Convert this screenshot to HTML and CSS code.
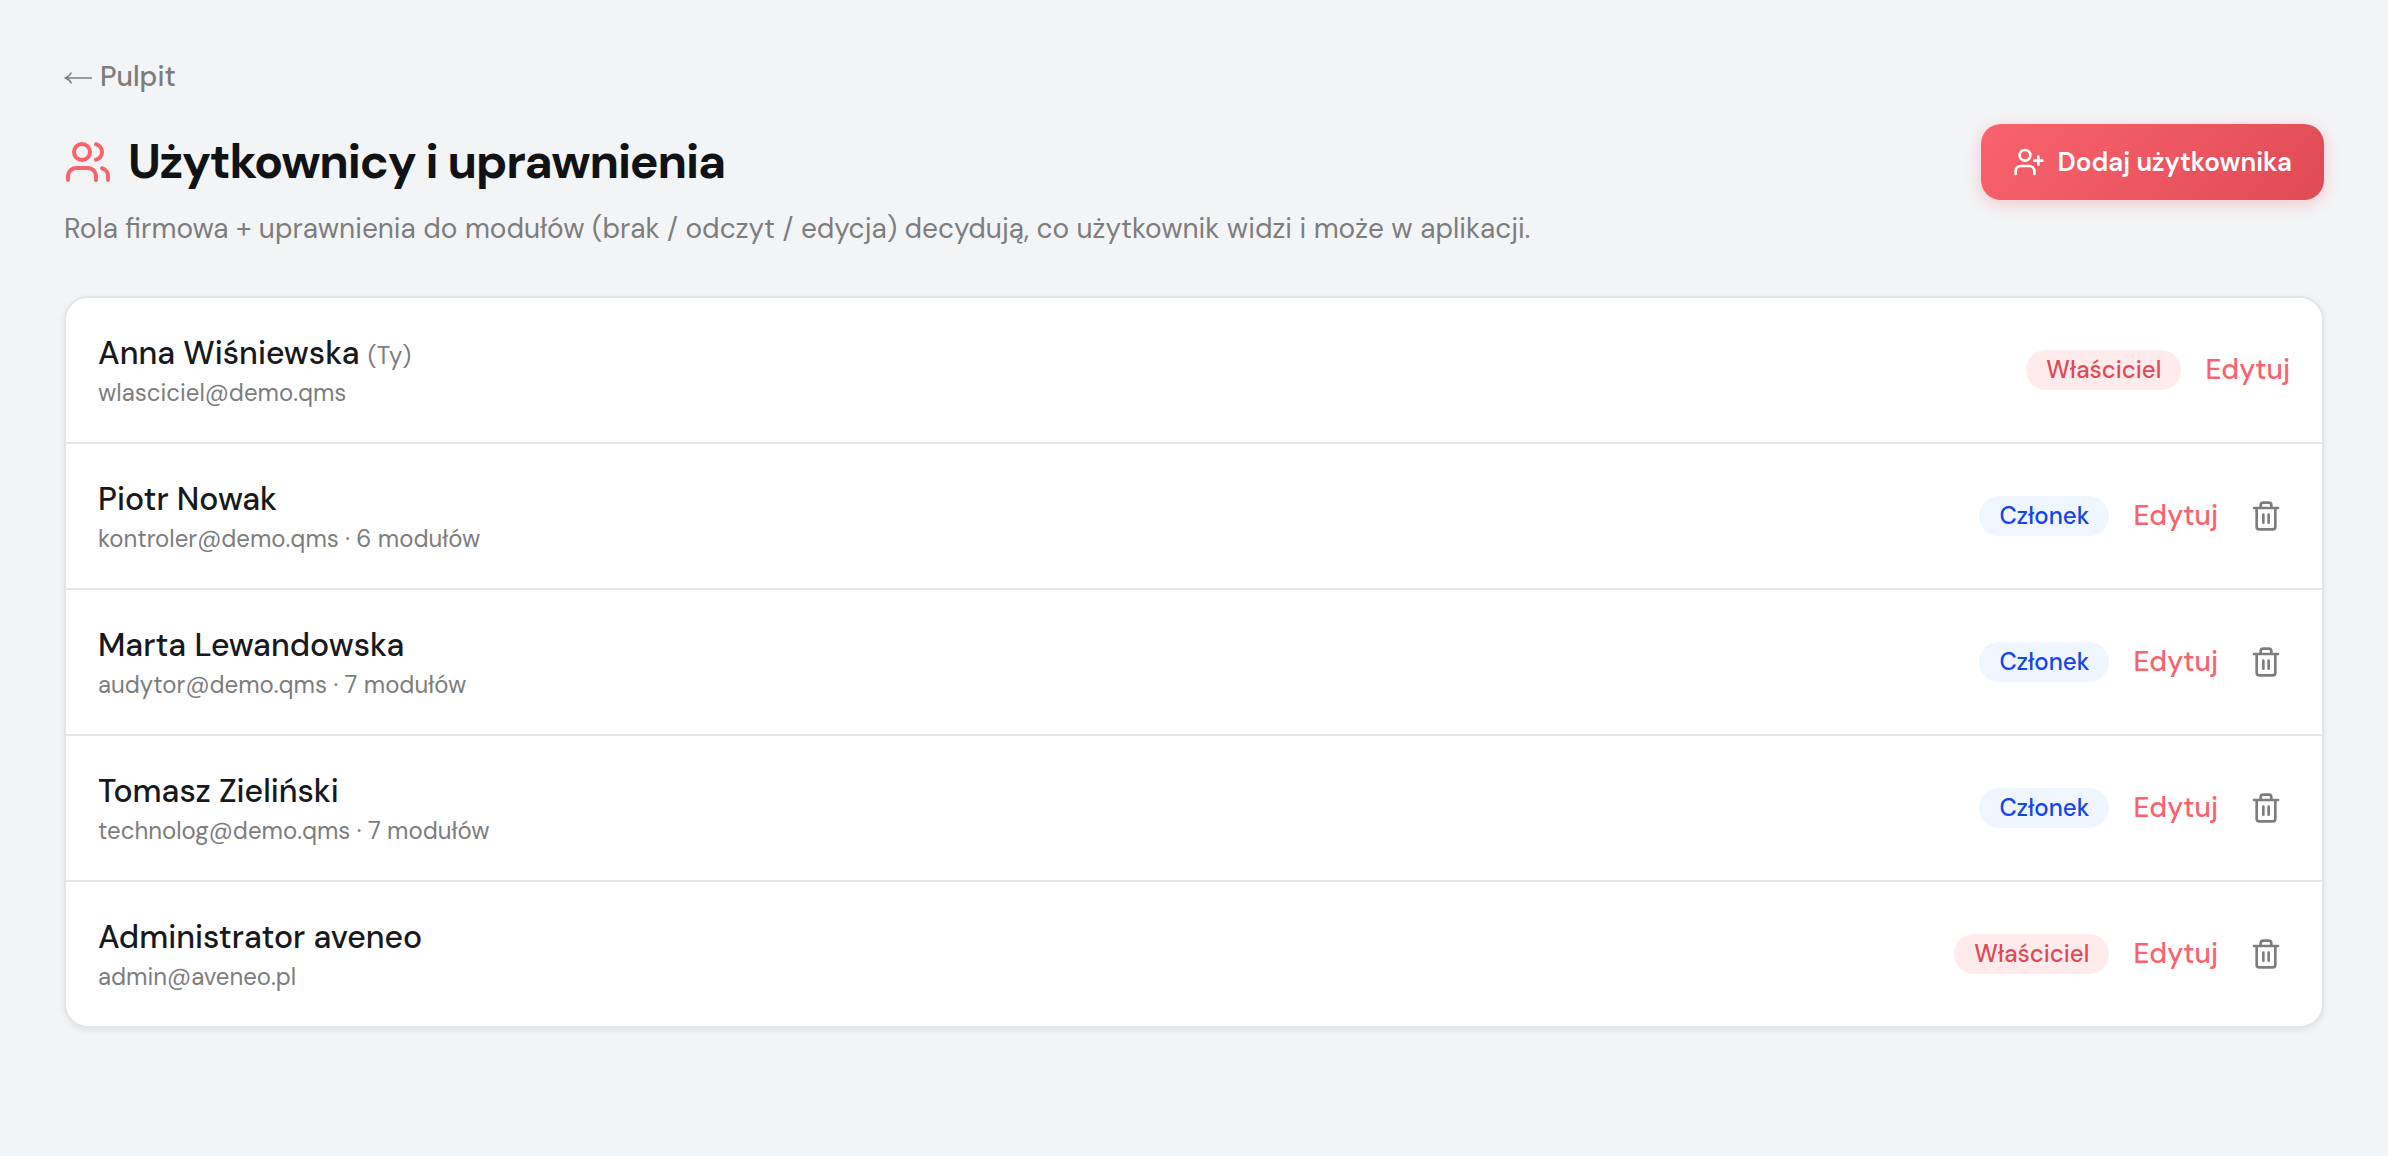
FILE: index.html
```html
<!DOCTYPE html>
<html lang="pl">
<head>
  <meta charset="utf-8">
  <meta name="viewport" content="width=device-width, initial-scale=1">
  <title>Użytkownicy i uprawnienia</title>
  <link rel="stylesheet" href="styles.css">
</head>
<body>
  <svg class="sprite" aria-hidden="true">
    <symbol id="icon-trash" viewBox="0 0 24 24">
      <path d="M3 6h18M19 6v14a2 2 0 0 1-2 2H7a2 2 0 0 1-2-2V6M8 6V4a2 2 0 0 1 2-2h4a2 2 0 0 1 2 2v2M10 11v6M14 11v6"/>
    </symbol>
  </svg>
  <main class="page">
    <a class="back" href="#"><svg class="arrow" viewBox="0 0 28 16" aria-hidden="true"><path d="M28 9H2M7.500 3.500Q5.500 7.500 1.500 9Q5.500 10.500 7.500 14.500"/></svg>Pulpit</a>
    <header class="header">
      <h1 class="title">
        <svg class="icon icon-lg" viewBox="0 0 24 24" aria-hidden="true"><path d="M16 21v-2a4 4 0 0 0-4-4H6a4 4 0 0 0-4 4v2"/><circle cx="9" cy="7" r="4"/><path d="M22 21v-2a4 4 0 0 0-3-3.87M16 3.13a4 4 0 0 1 0 7.75"/></svg>
        Użytkownicy i uprawnienia
      </h1>
      <button class="add" type="button">
        <svg class="icon" viewBox="0 0 24 24" aria-hidden="true"><path d="M16 21v-2a4 4 0 0 0-4-4H6a4 4 0 0 0-4 4v2"/><circle cx="9" cy="7" r="4"/><path d="M19 8v6M22 11h-6"/></svg>
        Dodaj użytkownika
      </button>
    </header>
    <p class="subtitle">Rola firmowa + uprawnienia do modułów (brak / odczyt / edycja) decydują, co użytkownik widzi i może w aplikacji.</p>
    <ul class="users">
      <li class="user">
        <div class="who"><div class="name">Anna Wiśniewska <span class="you">(Ty)</span></div><div class="meta">wlasciciel@demo.qms</div></div>
        <span class="badge badge-owner">Właściciel</span>
        <button class="edit" type="button">Edytuj</button>
      </li>
      <li class="user">
        <div class="who"><div class="name">Piotr Nowak</div><div class="meta">kontroler@demo.qms · 6 modułów</div></div>
        <span class="badge badge-member">Członek</span>
        <button class="edit" type="button">Edytuj</button>
        <button class="remove" type="button" aria-label="Usuń"><svg class="icon"><use href="#icon-trash"/></svg></button>
      </li>
      <li class="user">
        <div class="who"><div class="name">Marta Lewandowska</div><div class="meta">audytor@demo.qms · 7 modułów</div></div>
        <span class="badge badge-member">Członek</span>
        <button class="edit" type="button">Edytuj</button>
        <button class="remove" type="button" aria-label="Usuń"><svg class="icon"><use href="#icon-trash"/></svg></button>
      </li>
      <li class="user">
        <div class="who"><div class="name">Tomasz Zieliński</div><div class="meta">technolog@demo.qms · 7 modułów</div></div>
        <span class="badge badge-member">Członek</span>
        <button class="edit" type="button">Edytuj</button>
        <button class="remove" type="button" aria-label="Usuń"><svg class="icon"><use href="#icon-trash"/></svg></button>
      </li>
      <li class="user">
        <div class="who"><div class="name">Administrator aveneo</div><div class="meta">admin@aveneo.pl</div></div>
        <span class="badge badge-owner">Właściciel</span>
        <button class="edit" type="button">Edytuj</button>
        <button class="remove" type="button" aria-label="Usuń"><svg class="icon"><use href="#icon-trash"/></svg></button>
      </li>
    </ul>
  </main>
</body>
</html>
```
FILE: styles.css
```css
*, *::before, *::after { box-sizing: border-box; }

body {
  margin: 0;
  min-height: 100vh;
  background: #f3f4f6;
  color: #18191b;
  font-family: "DM Sans", Inter, "Liberation Sans", sans-serif;
  font-size: 28px;
  line-height: 42px;
}

button {
  border: 0;
  padding: 0;
  background: none;
  font: inherit;
  cursor: pointer;
}

.sprite { display: none; }

.icon {
  flex: none;
  width: 32px;
  height: 32px;
  fill: none;
  stroke: currentColor;
  stroke-width: 2;
  stroke-linecap: round;
  stroke-linejoin: round;
}

.icon-lg { width: 48px; height: 48px; color: #f9636e; }

.page { padding: 56px 64px; }

.back {
  display: flex;
  align-items: center;
  gap: 8px;
  width: fit-content;
  color: #7d7d7d;
  font-weight: 500;
  text-decoration: none;
}

.arrow {
  width: 28px;
  height: 16px;
  fill: none;
  stroke: currentColor;
  stroke-width: 1.5;
}

.header {
  display: flex;
  align-items: center;
  justify-content: space-between;
  gap: 32px;
  margin-top: 26px;
}

.title {
  display: flex;
  align-items: center;
  gap: 16px;
  margin: 0;
  color: #111214;
  font-size: 48px;
  font-weight: 700;
  letter-spacing: -0.025em;
  line-height: 56px;
}

.add {
  display: flex;
  align-items: center;
  gap: 12px;
  padding: 18px 32px;
  border-radius: 20px;
  background: linear-gradient(135deg, #f9636e, #df4b55);
  box-shadow: 0 4px 16px rgba(249, 99, 110, 0.3);
  color: #fff;
  font-size: 26px;
  font-weight: 600;
  line-height: 40px;
}

.subtitle { margin: 8px 0 0; color: #7d7d7d; }

.users {
  margin: 46px 0 0;
  padding: 0;
  border: 2px solid #e4e5e7;
  border-radius: 24px;
  background: #fff;
  box-shadow: 0 2px 6px rgba(0, 0, 0, 0.08);
  list-style: none;
}

.user {
  display: flex;
  align-items: center;
  gap: 24px;
  padding: 32px;
}

.user + .user { border-top: 2px solid #e4e5e7; }

.who { flex: 1; min-width: 0; }

.name { font-size: 32px; font-weight: 500; line-height: 46px; }

.you, .meta { color: #7d7d7d; font-size: 24px; font-weight: 400; line-height: 34px; }

.badge {
  padding: 0 20px;
  border-radius: 20px;
  font-size: 24px;
  font-weight: 500;
  line-height: 40px;
}

.badge-owner { background: #ffebec; color: #df4b55; }

.badge-member { background: #eff6ff; color: #1447e6; }

.edit { color: #f9636e; font-weight: 500; }

.remove { display: flex; padding: 8px; color: #7d7d7d; }
```
